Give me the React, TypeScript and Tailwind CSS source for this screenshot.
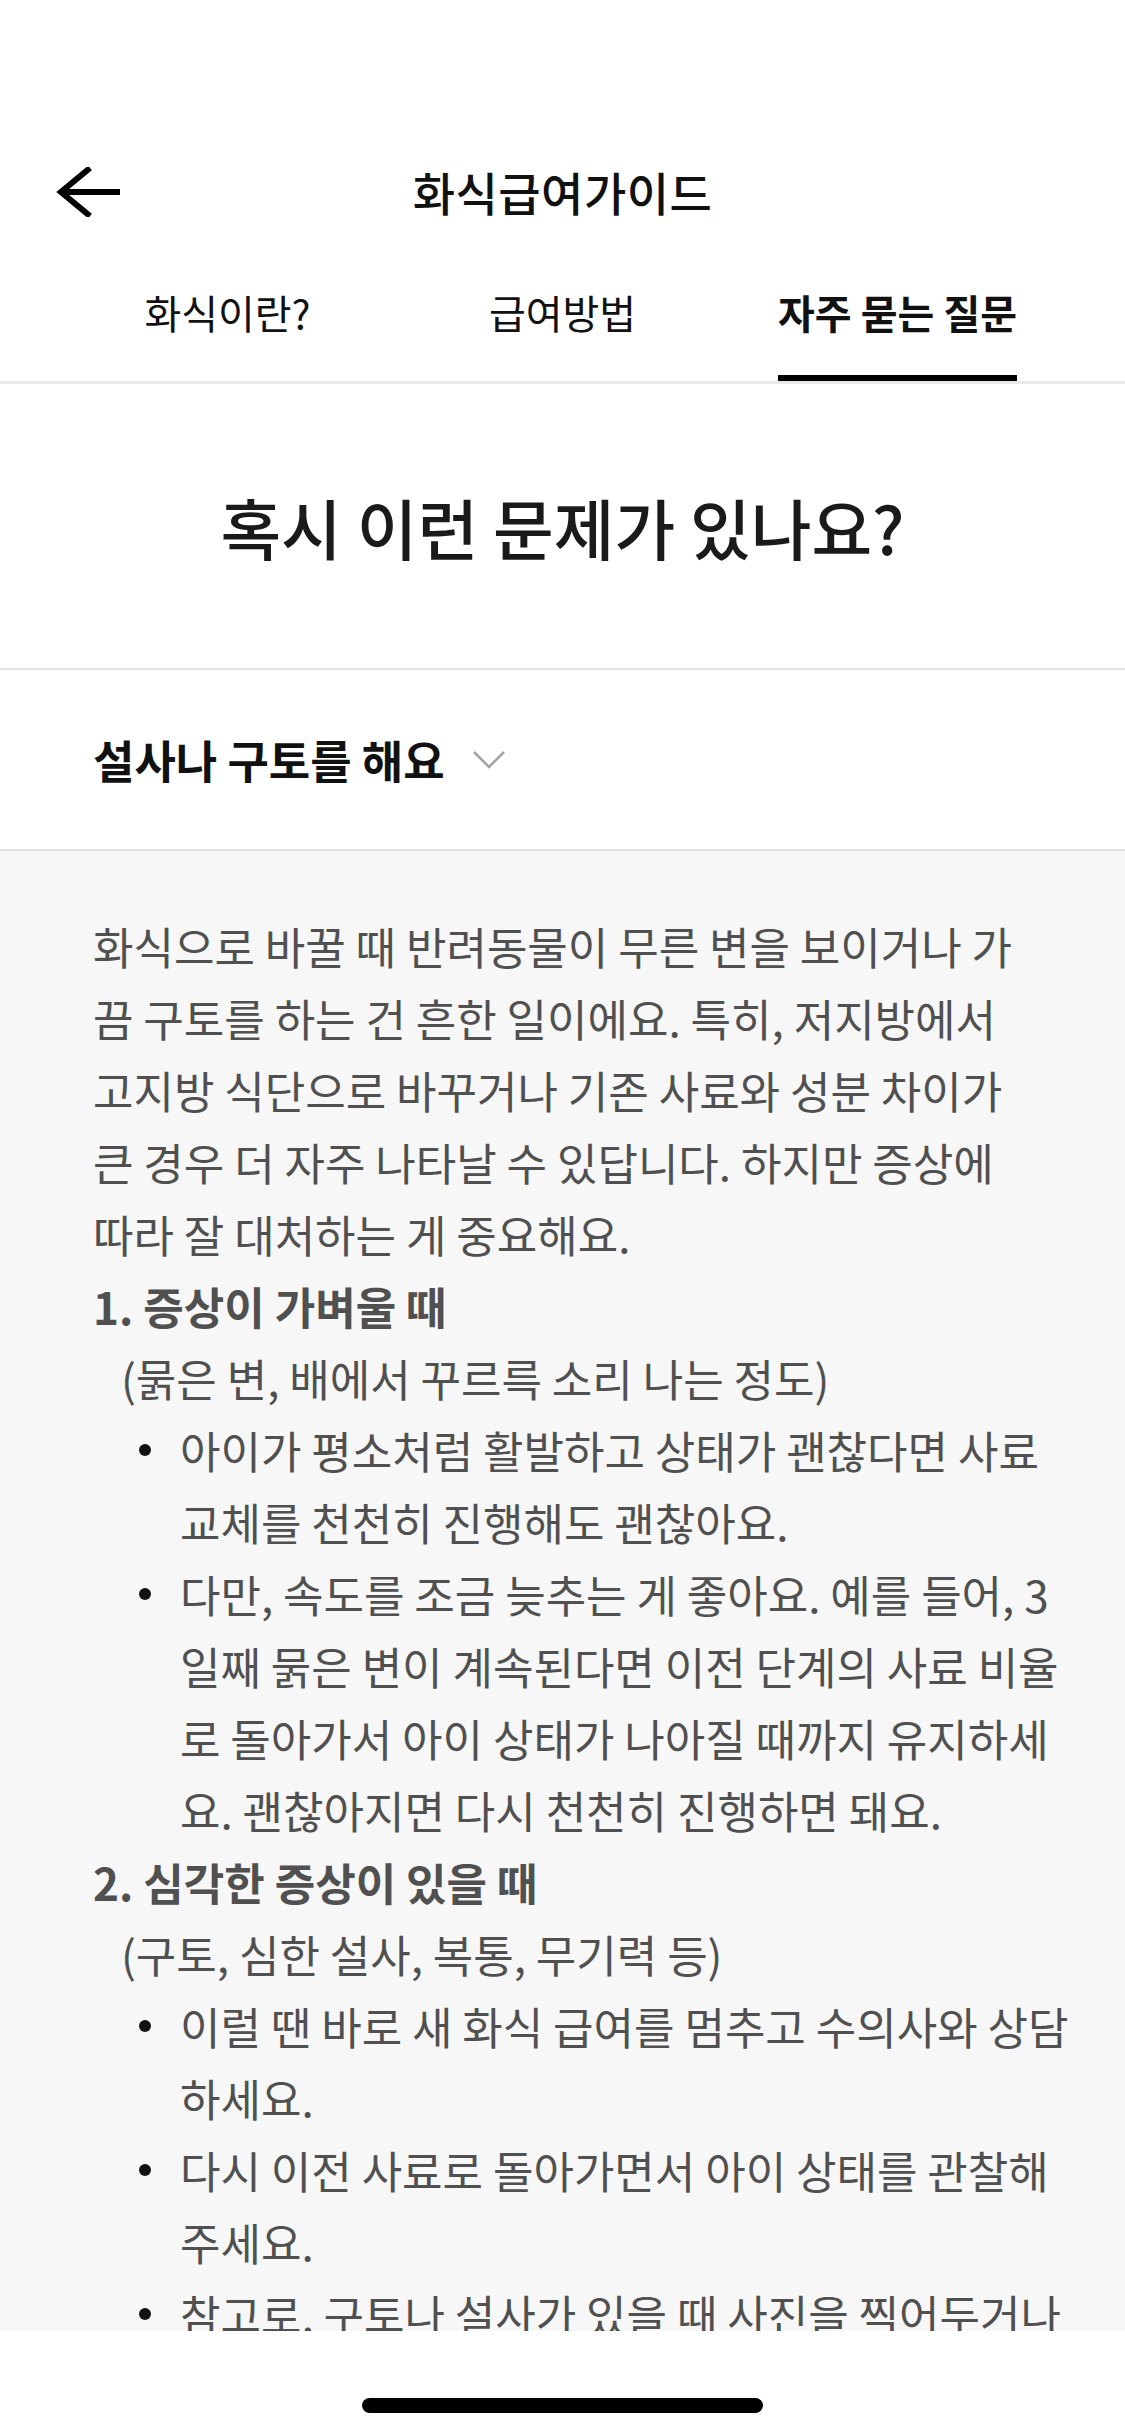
const font = "font-['Noto_Sans_CJK_KR','Noto_Sans',sans-serif]";

function Line({ children }: { children: React.ReactNode }) {
  return <div className="h-[72px] leading-[72px] whitespace-nowrap">{children}</div>;
}

function Bullet({ lines }: { lines: string[] }) {
  return (
    <div className="flex pl-[46px]">
      <div className="flex h-[72px] w-[41px] shrink-0 items-center">
        <span className="h-[12px] w-[12px] rounded-full bg-[#111]" />
      </div>
      <div>
        {lines.map((l) => (
          <Line key={l}>{l}</Line>
        ))}
      </div>
    </div>
  );
}

const tabs = ["화식이란?", "급여방법", "자주 묻는 질문"];

export default function App() {
  return (
    <div className={`${font} flex h-[2436px] w-[1125px] flex-col overflow-hidden bg-white text-[#111]`}>
      {/* status bar space */}
      <div className="h-[125px] shrink-0" />

      {/* nav bar */}
      <div className="relative flex h-[132px] shrink-0 items-center justify-center">
        <button className="absolute left-[56px] top-[42px]">
          <svg width="68" height="50" viewBox="0 0 68 50" fill="none" stroke="#000" strokeWidth="6">
            <path d="M4 25H64" strokeLinecap="butt" />
            <path d="M34 1L5 25L34 49" strokeLinejoin="miter" />
          </svg>
        </button>
        <h1 className="text-[46px] font-medium leading-none tracking-[0.5px]">화식급여가이드</h1>
      </div>

      {/* tabs */}
      <div className="grid h-[127px] shrink-0 grid-cols-3 border-b-[3px] border-[#e8e8e8] px-[60px]">
        {tabs.map((t, i) => (
          <div key={t} className="flex justify-center">
            <div className="flex h-full flex-col items-stretch justify-between">
              <span
                className={`pt-[32px] text-[40px] leading-[46px] ${i === 2 ? "font-bold" : "font-normal"}`}
              >
                {t}
              </span>
              {i === 2 ? <span className="h-[6px] bg-black" /> : <span />}
            </div>
          </div>
        ))}
      </div>

      {/* question heading */}
      <div className="flex h-[286px] shrink-0 items-center justify-center border-b-2 border-[#e2e2e2]">
        <h2 className="text-[66px] font-medium leading-none text-[#1a1a1a]">혹시 이런 문제가 있나요?</h2>
      </div>

      {/* accordion header */}
      <div className="flex h-[181px] shrink-0 items-center gap-[28px] border-b-2 border-[#e2e2e2] px-[93px]">
        <span className="text-[45px] font-bold leading-none">설사나 구토를 해요</span>
        <svg width="32" height="18" viewBox="0 0 32 18" fill="none" stroke="#a3a3a3" strokeWidth="2.5">
          <path d="M1 1L16 16L31 1" />
        </svg>
      </div>

      {/* answer body */}
      <div className="min-h-0 flex-1 overflow-hidden bg-[#f7f7f7] pl-[93px] pt-[59px] text-[44px] text-[#505050]">
        <Line>화식으로 바꿀 때 반려동물이 무른 변을 보이거나 가</Line>
        <Line>끔 구토를 하는 건 흔한 일이에요. 특히, 저지방에서</Line>
        <Line>고지방 식단으로 바꾸거나 기존 사료와 성분 차이가</Line>
        <Line>큰 경우 더 자주 나타날 수 있답니다. 하지만 증상에</Line>
        <Line>따라 잘 대처하는 게 중요해요.</Line>
        <div className="font-bold">
          <Line>1. 증상이 가벼울 때</Line>
        </div>
        <div className="pl-[28px]">
          <Line>(묽은 변, 배에서 꾸르륵 소리 나는 정도)</Line>
        </div>
        <Bullet lines={["아이가 평소처럼 활발하고 상태가 괜찮다면 사료", "교체를 천천히 진행해도 괜찮아요."]} />
        <Bullet
          lines={[
            "다만, 속도를 조금 늦추는 게 좋아요. 예를 들어, 3",
            "일째 묽은 변이 계속된다면 이전 단계의 사료 비율",
            "로 돌아가서 아이 상태가 나아질 때까지 유지하세",
            "요. 괜찮아지면 다시 천천히 진행하면 돼요.",
          ]}
        />
        <div className="font-bold">
          <Line>2. 심각한 증상이 있을 때</Line>
        </div>
        <div className="pl-[28px]">
          <Line>(구토, 심한 설사, 복통, 무기력 등)</Line>
        </div>
        <Bullet lines={["이럴 땐 바로 새 화식 급여를 멈추고 수의사와 상담", "하세요."]} />
        <Bullet lines={["다시 이전 사료로 돌아가면서 아이 상태를 관찰해", "주세요."]} />
        <Bullet lines={["참고로, 구토나 설사가 있을 때 사진을 찍어두거나", "수의사와 상담할 때 도움이 돼요."]} />
      </div>

      {/* home indicator */}
      <div className="flex h-[105px] shrink-0 items-start justify-center bg-white pt-[67px]">
        <div className="h-[15px] w-[401px] rounded-full bg-black" />
      </div>
    </div>
  );
}
